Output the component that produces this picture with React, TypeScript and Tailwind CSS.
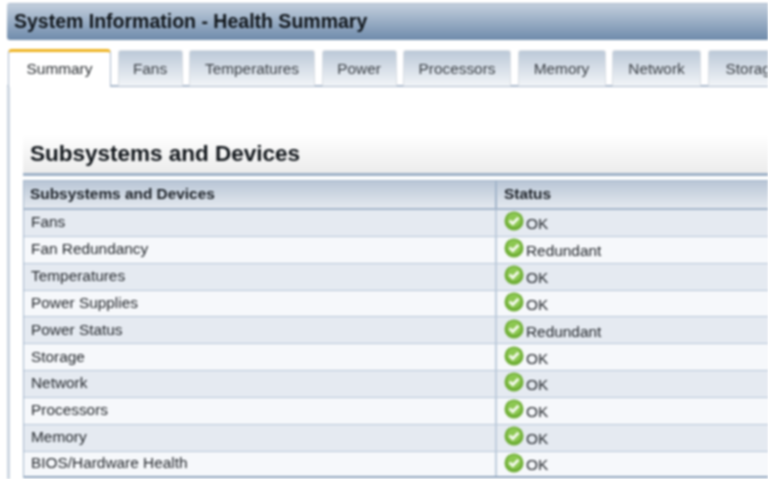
const tabs = [
  { name: "Fans", width: "w-[65px]" },
  { name: "Temperatures", width: "w-[126px]" },
  { name: "Power", width: "w-[75px]" },
  { name: "Processors", width: "w-[108px]" },
  { name: "Memory", width: "w-[88px]" },
  { name: "Network", width: "w-[89px]" },
  { name: "Storage", width: "w-[90px]" },
];

const rows = [
  ["Fans", "OK"],
  ["Fan Redundancy", "Redundant"],
  ["Temperatures", "OK"],
  ["Power Supplies", "OK"],
  ["Power Status", "Redundant"],
  ["Storage", "OK"],
  ["Network", "OK"],
  ["Processors", "OK"],
  ["Memory", "OK"],
  ["BIOS/Hardware Health", "OK"],
];

function OkIcon() {
  return (
    <svg width="20" height="20" viewBox="0 0 20 20" className="shrink-0 -mt-[3px]">
      <circle cx="10" cy="10" r="9.5" fill="#6fae35" />
      <circle cx="10" cy="9" r="7" fill="#8cc751" />
      <path d="M5.5 9.5 L8.8 12.6 L14.5 6.8" fill="none" stroke="#f2f8ea" strokeWidth="3" />
    </svg>
  );
}

export default function App() {
  return (
    <div className="w-[768px] h-[479px] overflow-hidden bg-white font-['Liberation_Sans',sans-serif] blur-[0.8px]">
      {/* Title */}
      <div className="h-[49px] pt-[3px] pl-[7px]">
        <div className="h-[37px] flex items-center pl-[7px] rounded-l-[3px] border-t border-[#a9b8cb] bg-gradient-to-b from-[#c3cfdd] to-[#6f8bab]">
          <span className="text-[19.5px] font-bold text-[#0f1419]">System Information - Health Summary</span>
        </div>
      </div>

      {/* Tabs */}
      <div className="h-[36px] flex pl-[8px] gap-[6.5px]">
        <div className="w-[103px] h-[38px] shrink-0 relative z-10 flex items-center justify-center rounded-t-[4px] border-t-[3px] border-x border-t-[#eeb320] border-x-[#a9b8cb] bg-white text-[15.4px] text-[#2a2e32]">
          <span className="-mt-[1px]">Summary</span>
        </div>
        {tabs.map((tab) => (
          <div
            key={tab.name}
            className={`${tab.width} shrink-0 h-[36px] mt-[1px] flex items-center justify-center rounded-t-[3px] border-x border-t border-[#d8dde3] bg-gradient-to-b from-[#bcc9d8] to-[#f2f5f8] text-[15.4px] text-[#3a3f45]`}
          >
            <span>{tab.name}</span>
          </div>
        ))}
      </div>

      {/* Content */}
      <div className="h-[394px] ml-[7px] border-l-[3px] border-t-[2px] border-l-[#cdd6e1] border-t-[#a9b8cb] pl-[13px] pt-[47px]">
        <div className="h-[42px] flex items-center pl-[7px] border-b-[3px] border-[#9db0c6] bg-gradient-to-b from-white to-[#ececec]">
          <span className="text-[22.5px] font-bold text-[#0f1419]">Subsystems and Devices</span>
        </div>
        <div className="mt-[4px] border-t border-l border-[#a3b5ca]">
          <div className="h-[29px] flex items-center border-b-[2px] border-[#a3b5ca] bg-gradient-to-b from-[#b9c6d6] to-[#e4e9ef] text-[15.4px] font-bold text-[#1a1f25]">
            <div className="w-[471px] pl-[6px] -mt-[2px]">Subsystems and Devices</div>
            <div className="h-full flex-1 flex items-center pl-[7px] border-l-[2px] border-[#a3b5ca]">
              <span className="-mt-[2px]">Status</span>
            </div>
          </div>
          {rows.map(([name, status], i) => (
            <div
              key={name}
              className={`h-[26.85px] flex items-center border-b border-[#b7c6d8] last:border-b-[2px] last:border-[#8fa4bd] text-[15.4px] text-[#24282d] ${i % 2 === 0 ? "bg-[#e5eaf1]" : "bg-[#f6f8fb]"}`}
            >
              <div className="w-[471px] pl-[7px] -mt-[2px]">{name}</div>
              <div className="h-full flex-1 flex items-center pl-[7px] gap-[2px] border-l-[2px] border-[#c0cddc]">
                <OkIcon />
                <span className="mt-[2px]">{status}</span>
              </div>
            </div>
          ))}
        </div>
      </div>
    </div>
  );
}
